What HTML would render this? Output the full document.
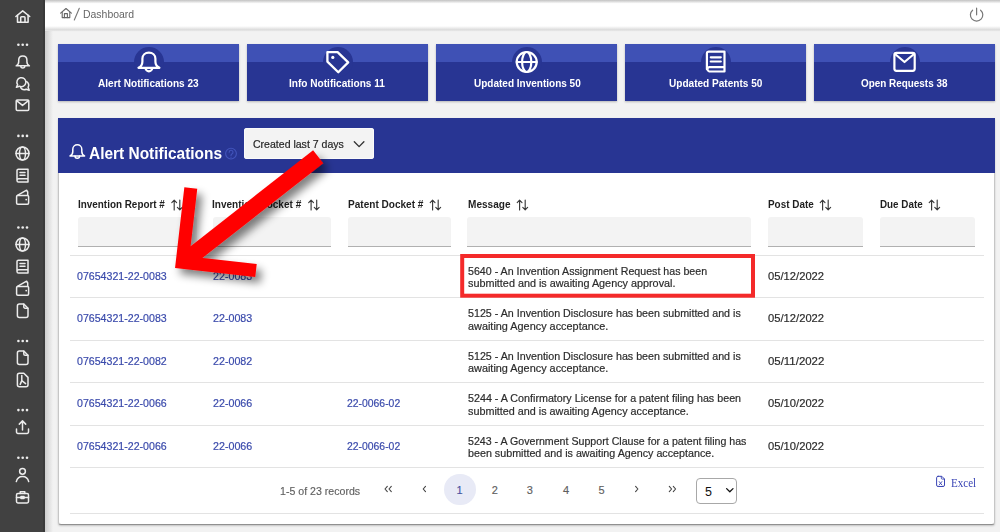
<!DOCTYPE html>
<html><head><meta charset="utf-8">
<style>
*{box-sizing:border-box;margin:0;padding:0}
html,body{width:1000px;height:532px;overflow:hidden;background:#f2f2f2;font-family:"Liberation Sans",sans-serif;position:relative}
.abs{position:absolute}
#side{left:0;top:0;width:45px;height:532px;background:#414141}
#top{left:45px;top:0;width:955px;height:30px;background:#fff;border-bottom:1px solid #dedede;box-shadow:0 1px 1px rgba(0,0,0,.06)}
#topshadow{left:45px;top:0;width:955px;height:6px;background:linear-gradient(#c2c2c2,rgba(255,255,255,.6) 60%,rgba(255,255,255,0))}
#topbot{left:45px;top:26px;width:955px;height:5px;background:linear-gradient(rgba(230,230,230,0),#dedede 70%,#e6e6e6)}
.card{top:44px;width:181px;height:57px;background:#283593;box-shadow:0 1px 2px rgba(0,0,0,.25)}
.card .band{position:absolute;left:0;top:0;width:100%;height:18px;background:#3f51b5}
.card .circ{position:absolute;left:75.5px;top:3px;width:30px;height:30px;border-radius:50%;background:#283593}
#panel{left:58px;top:118px;width:937px;height:407px;background:#fff;border:1px solid #c6c6c6;border-bottom:1px solid #909090;border-radius:0 0 3px 3px;box-shadow:0 1px 2px rgba(0,0,0,.2)}
#hdr{left:58px;top:118px;width:937px;height:55px;background:#283593}
.t{position:absolute;white-space:nowrap;transform-origin:0 0}
.crumb{font-size:11.5px;color:#666;line-height:14px}
.title{font-size:16.5px;font-weight:bold;color:#fff;line-height:18px}
.dd{font-size:11px;color:#262626;line-height:13px;-webkit-text-stroke:0.2px #262626}
.hd{font-size:11px;color:#1f1f1f;line-height:13px;font-weight:bold}
.cl{font-size:11.5px;color:#fff;line-height:13px;font-weight:bold}
.inp{position:absolute;top:217px;height:30px;background:#f3f3f3;border-bottom:1px solid #b0b0b0;border-radius:3px 3px 0 0}
.hl{position:absolute;left:70px;width:914px;height:1px;background:#e3e3e3}
.lnk{color:#3a4aab;font-size:11.4px;line-height:13px;-webkit-text-stroke:0.2px #3a4aab}
.msg{color:#2c2c2c;font-size:11.2px;line-height:13px;-webkit-text-stroke:0.2px #2c2c2c}
.dt{font-size:11.6px}
.pg{color:#5f5f5f;font-size:11px;line-height:13px;-webkit-text-stroke:0.15px #5f5f5f}
.pg.cur{color:#3f51b5}
.sel{font-size:12.5px;line-height:14px;color:#111}
.excel{font-family:"Liberation Serif",serif;font-size:11.5px;line-height:13px;color:#3a45b5}
</style></head><body>
<div id="side" class="abs"></div>
<div class="abs" style="left:43px;top:0;width:2px;height:532px;background:#393939"></div>
<div class="abs" style="left:45px;top:0;width:8px;height:532px;background:linear-gradient(90deg,#cdcdcd,#f2f2f2)"></div>
<div id="top" class="abs"></div>
<div id="topshadow" class="abs"></div>
<div id="topbot" class="abs"></div>
<div class="card abs" style="left:58px"><div class="band"></div><div class="circ"></div></div>
<div class="card abs" style="left:247px"><div class="band"></div><div class="circ"></div></div>
<div class="card abs" style="left:436px"><div class="band"></div><div class="circ"></div></div>
<div class="card abs" style="left:625px"><div class="band"></div><div class="circ"></div></div>
<div class="card abs" style="left:814px"><div class="band"></div><div class="circ"></div></div>
<div id="panel" class="abs"></div>
<div id="hdr" class="abs"></div>
<div class="abs" style="left:244px;top:128px;width:130px;height:31px;background:#f3f3f3;border-radius:3px;box-shadow:inset 0 0 0 1px #fafafa"></div>
<div class="inp" style="left:78px;width:119px"></div>
<div class="inp" style="left:213px;width:118px"></div>
<div class="inp" style="left:348px;width:103px"></div>
<div class="inp" style="left:467px;width:284px"></div>
<div class="inp" style="left:768px;width:95px"></div>
<div class="inp" style="left:880px;width:95px"></div>
<div class="hl" style="top:255px"></div>
<div class="hl" style="top:297px"></div>
<div class="hl" style="top:340px"></div>
<div class="hl" style="top:382px"></div>
<div class="hl" style="top:425px"></div>
<div class="hl" style="top:467px"></div>
<div class="hl" style="top:513px"></div>
<div class="abs" style="left:444.3px;top:473.5px;width:31.5px;height:31.5px;border-radius:50%;background:#e8eaf6"></div>
<div class="abs" style="left:695.5px;top:477.5px;width:41.5px;height:26px;border:1px solid #a8a8a8;border-radius:4px;background:#fff"></div>
<div id="crumb" class="t crumb" style="left:83.07px;top:7.00px;transform:scaleX(0.9095)">Dashboard</div>
<div id="title" class="t title" style="left:89.00px;top:144.00px;transform:scaleX(0.9366)">Alert Notifications</div>
<div id="dd" class="t dd" style="left:253.00px;top:138.00px;transform:scaleX(0.9579)">Created last 7 days</div>
<div id="hd0" class="t hd" style="left:78.00px;top:198.00px;transform:scaleX(0.8996)">Invention Report #</div>
<div id="hd1" class="t hd" style="left:212.42px;top:198.00px;transform:scaleX(0.9126)">Invention Docket #</div>
<div id="hd2" class="t hd" style="left:348.00px;top:198.00px;transform:scaleX(0.9139)">Patent Docket #</div>
<div id="hd3" class="t hd" style="left:468.00px;top:198.00px;transform:scaleX(0.9142)">Message</div>
<div id="hd4" class="t hd" style="left:768.00px;top:198.00px;transform:scaleX(0.9009)">Post Date</div>
<div id="hd5" class="t hd" style="left:880.00px;top:198.00px;transform:scaleX(0.8941)">Due Date</div>
<div id="cl0" class="t cl" style="left:98.00px;top:77.00px;transform:scaleX(0.8748)">Alert Notifications 23</div>
<div id="cl1" class="t cl" style="left:289.00px;top:77.00px;transform:scaleX(0.8777)">Info Notifications 11</div>
<div id="cl2" class="t cl" style="left:473.75px;top:77.00px;transform:scaleX(0.8700)">Updated Inventions 50</div>
<div id="cl3" class="t cl" style="left:668.63px;top:77.00px;transform:scaleX(0.8749)">Updated Patents 50</div>
<div id="cl4" class="t cl" style="left:861.00px;top:77.00px;transform:scaleX(0.8616)">Open Requests 38</div>
<div id="l1_0" class="t lnk" style="left:77.48px;top:269.90px;transform:scaleX(0.9317)">07654321-22-0083</div>
<div id="l2_0" class="t lnk" style="left:213.00px;top:269.90px;transform:scaleX(0.9385)">22-0083</div>
<div id="m1_0" class="t msg" style="left:467.50px;top:265.00px;transform:scaleX(0.9516)">5640 - An Invention Assignment Request has been</div>
<div id="m2_0" class="t msg" style="left:467.51px;top:277.00px;transform:scaleX(0.9670)">submitted and is awaiting Agency approval.</div>
<div id="dt_0" class="t msg dt" style="left:768.00px;top:269.30px;transform:scaleX(0.9666)">05/12/2022</div>
<div id="l1_1" class="t lnk" style="left:77.48px;top:311.90px;transform:scaleX(0.9317)">07654321-22-0083</div>
<div id="l2_1" class="t lnk" style="left:213.00px;top:311.90px;transform:scaleX(0.9385)">22-0083</div>
<div id="m1_1" class="t msg" style="left:467.50px;top:307.00px;transform:scaleX(0.9555)">5125 - An Invention Disclosure has been submitted and is</div>
<div id="m2_1" class="t msg" style="left:467.50px;top:320.00px;transform:scaleX(0.9720)">awaiting Agency acceptance.</div>
<div id="dt_1" class="t msg dt" style="left:768.00px;top:311.30px;transform:scaleX(0.9666)">05/12/2022</div>
<div id="l1_2" class="t lnk" style="left:77.49px;top:354.90px;transform:scaleX(0.9317)">07654321-22-0082</div>
<div id="l2_2" class="t lnk" style="left:213.00px;top:354.90px;transform:scaleX(0.9385)">22-0082</div>
<div id="m1_2" class="t msg" style="left:467.50px;top:350.00px;transform:scaleX(0.9555)">5125 - An Invention Disclosure has been submitted and is</div>
<div id="m2_2" class="t msg" style="left:467.50px;top:362.00px;transform:scaleX(0.9720)">awaiting Agency acceptance.</div>
<div id="dt_2" class="t msg dt" style="left:767.99px;top:354.30px;transform:scaleX(0.9845)">05/11/2022</div>
<div id="l1_3" class="t lnk" style="left:77.48px;top:396.90px;transform:scaleX(0.9317)">07654321-22-0066</div>
<div id="l2_3" class="t lnk" style="left:213.00px;top:396.90px;transform:scaleX(0.9385)">22-0066</div>
<div id="l3_3" class="t lnk" style="left:347.49px;top:396.90px;transform:scaleX(0.9126)">22-0066-02</div>
<div id="m1_3" class="t msg" style="left:467.50px;top:392.00px;transform:scaleX(0.9587)">5244 - A Confirmatory License for a patent filing has been</div>
<div id="m2_3" class="t msg" style="left:467.50px;top:405.00px;transform:scaleX(0.9649)">submitted and is awaiting Agency acceptance.</div>
<div id="dt_3" class="t msg dt" style="left:768.00px;top:396.30px;transform:scaleX(0.9666)">05/10/2022</div>
<div id="l1_4" class="t lnk" style="left:77.48px;top:439.90px;transform:scaleX(0.9317)">07654321-22-0066</div>
<div id="l2_4" class="t lnk" style="left:213.00px;top:439.90px;transform:scaleX(0.9385)">22-0066</div>
<div id="l3_4" class="t lnk" style="left:347.49px;top:439.90px;transform:scaleX(0.9126)">22-0066-02</div>
<div id="m1_4" class="t msg" style="left:467.51px;top:435.00px;transform:scaleX(0.9505)">5243 - A Government Support Clause for a patent filing has</div>
<div id="m2_4" class="t msg" style="left:467.50px;top:447.00px;transform:scaleX(0.9586)">been submitted and is awaiting Agency acceptance.</div>
<div id="dt_4" class="t msg dt" style="left:768.00px;top:439.30px;transform:scaleX(0.9666)">05/10/2022</div>
<div id="pgr" class="t pg" style="left:280.01px;top:484.50px;transform:scaleX(0.9640)">1-5 of 23 records</div>
<div id="pn1" class="t pg cur" style="left:456.50px;top:484.00px;transform:scaleX(1.0000)">1</div>
<div id="pn2" class="t pg" style="left:491.80px;top:484.00px;transform:scaleX(1.0000)">2</div>
<div id="pn3" class="t pg" style="left:526.80px;top:484.00px;transform:scaleX(1.0000)">3</div>
<div id="pn4" class="t pg" style="left:563.00px;top:484.00px;transform:scaleX(1.0000)">4</div>
<div id="pn5" class="t pg" style="left:598.60px;top:484.00px;transform:scaleX(1.0000)">5</div>
<div id="sel" class="t sel" style="left:705.00px;top:485.00px;transform:scaleX(1.0000)">5</div>
<div id="excel" class="t excel" style="left:951.00px;top:477.00px;transform:scaleX(0.9615)">Excel</div>
<svg class="abs" style="left:0;top:0" width="1000" height="532" viewBox="0 0 1000 532" fill="none" stroke-linecap="round" stroke-linejoin="round">
<defs>
<filter id="sh" x="-20%" y="-20%" width="150%" height="150%"><feGaussianBlur in="SourceAlpha" stdDeviation="4"/><feOffset dx="5" dy="6" result="b"/><feComponentTransfer><feFuncA type="linear" slope="0.5"/></feComponentTransfer><feMerge><feMergeNode/><feMergeNode in="SourceGraphic"/></feMerge></filter>
</defs>
<!-- sidebar icons -->
<g stroke="#ececec" stroke-width="1.55">
<path d="M15.9,16.5 L22.7,10.9 L29.7,16.5"/>
<path d="M17.5,15.2 V22.3 H28.1 V15.2"/>
<path d="M20.7,22.3 V17.6 Q20.7,16.8 21.5,16.8 H24.2 Q25,16.8 25,17.6 V22.3"/>
</g>
<g fill="#ececec">
<circle cx="18.4" cy="44.8" r="1.3"/><circle cx="22.7" cy="44.8" r="1.3"/><circle cx="27.0" cy="44.8" r="1.3"/>
<circle cx="18.4" cy="135.9" r="1.3"/><circle cx="22.7" cy="135.9" r="1.3"/><circle cx="27.0" cy="135.9" r="1.3"/>
<circle cx="18.4" cy="227.5" r="1.3"/><circle cx="22.7" cy="227.5" r="1.3"/><circle cx="27.0" cy="227.5" r="1.3"/>
<circle cx="18.4" cy="341" r="1.3"/><circle cx="22.7" cy="341" r="1.3"/><circle cx="27.0" cy="341" r="1.3"/>
<circle cx="18.4" cy="410.1" r="1.3"/><circle cx="22.7" cy="410.1" r="1.3"/><circle cx="27.0" cy="410.1" r="1.3"/>
<circle cx="18.4" cy="457.7" r="1.3"/><circle cx="22.7" cy="457.7" r="1.3"/><circle cx="27.0" cy="457.7" r="1.3"/>
</g>
<g stroke="#ececec" stroke-width="1.5">
<!-- bell -->
<path d="M16.2,65.8 H29.4 M16.2,65.8 C17.8,65 18.7,63.8 18.7,61.8 V60 C18.7,57.5 20.5,55.9 22.8,55.9 C25.1,55.9 26.9,57.5 26.9,60 V61.8 C26.9,63.8 27.8,65 29.4,65.8"/>
<path d="M20.8,66 A2,2 0 0 0 24.8,66"/>
<!-- chat -->
<path d="M16.4,87.2 L17.6,84.6 A4.5,4.5 0 1 1 19.4,86.2 Z"/>
<path d="M26.7,81.6 A4.5,4.5 0 0 1 28.1,87.3 L29.2,90.2 L26.3,89.2 A4.5,4.5 0 0 1 20.6,87.6"/>
<!-- mail -->
<rect x="16.2" y="100.1" width="12.6" height="10.3" rx="1.2"/>
<path d="M16.5,100.6 L22.5,105.4 L28.5,100.6"/>
<!-- globe -->
<circle cx="22.5" cy="153.5" r="6.5"/><path d="M16,153.5 H29"/><ellipse cx="22.5" cy="153.5" rx="3" ry="6.5"/>
<circle cx="22.5" cy="244.5" r="6.5"/><path d="M16,244.5 H29"/><ellipse cx="22.5" cy="244.5" rx="3" ry="6.5"/>
<!-- book -->
<path d="M17,180.3 V170.6 A1.4,1.4 0 0 1 18.4,169.2 H28 V182 H18.6 A1.6,1.6 0 0 1 18.6,178.8 H28"/>
<path d="M20,172.6 H25 M20,175.2 H25"/>
<path d="M17,271.3 V261.6 A1.4,1.4 0 0 1 18.4,260.2 H28 V273 H18.6 A1.6,1.6 0 0 1 18.6,269.8 H28"/>
<path d="M20,263.6 H25 M20,266.2 H25"/>
<!-- wallet -->
<rect x="16.6" y="195.4" width="12" height="8.8" rx="1.2"/>
<path d="M17.4,195.3 L26.6,190.2 L27.7,192 V195.3"/><circle cx="26.2" cy="199.6" r="0.9" fill="#ececec" stroke="none"/>
<rect x="16.6" y="286.4" width="12" height="8.8" rx="1.2"/>
<path d="M17.4,286.3 L26.6,281.2 L27.7,283 V286.3"/><circle cx="26.2" cy="290.6" r="0.9" fill="#ececec" stroke="none"/>
<!-- file -->
<path d="M17.4,306 A2,2 0 0 1 19.4,304 H23.8 L28,308.2 V315.6 A2,2 0 0 1 26,317.6 H19.4 A2,2 0 0 1 17.4,315.6 Z"/>
<path d="M23.8,304.2 V306.9 A1.3,1.3 0 0 0 25.1,308.2 H27.8"/>
<path d="M17.4,353 A2,2 0 0 1 19.4,351 H23.8 L28,355.2 V362.6 A2,2 0 0 1 26,364.6 H19.4 A2,2 0 0 1 17.4,362.6 Z"/>
<path d="M23.8,351.2 V353.9 A1.3,1.3 0 0 0 25.1,355.2 H27.8"/>
<!-- pdf -->
<path d="M17.4,375.2 A2,2 0 0 1 19.4,373.2 H23.8 L28,377.4 V384.8 A2,2 0 0 1 26,386.8 H19.4 A2,2 0 0 1 17.4,384.8 Z"/>
<path d="M21.8,375.6 V380.6 L20.2,384.4 M21.8,380.6 L25.6,383.6"/>
<!-- upload -->
<path d="M16.5,429 V432 A1.4,1.4 0 0 0 17.9,433.4 H27.1 A1.4,1.4 0 0 0 28.5,432 V429"/>
<path d="M22.5,430 V421 M19.3,424.1 L22.5,420.9 L25.7,424.1"/>
<!-- person -->
<circle cx="22.5" cy="471.3" r="2.9"/>
<path d="M16.3,481.6 C17.2,477.8 19.5,476.5 22.5,476.5 C25.5,476.5 27.8,477.8 28.7,481.6"/>
<!-- briefcase -->
<rect x="16.5" y="493.6" width="12" height="9.4" rx="1.4"/>
<path d="M20.2,493.6 V491.8 H24.8 V493.6 M16.5,497.6 H28.5"/>
<rect x="21" y="496.6" width="3" height="2"/>
</g>

<!-- top bar icons -->
<g stroke="#666" stroke-width="1.1">
<path d="M60.6,13.2 L66,8.5 L71.4,13.2"/>
<path d="M62.2,12.4 V17.6 H69.8 V12.4"/>
<path d="M64.4,17.6 V13.6 H67.4 V17.6"/>
<path d="M79.3,8.2 L74.3,20" stroke="#777"/>
<path d="M972.6,10.2 A6.2,6.2 0 1 0 980.6,10.2 M976.6,8.2 V14.8" stroke="#777" stroke-width="1.2"/>
</g>

<!-- card icons -->
<g stroke="#fff" stroke-width="2.2">
<path d="M138.5,67.8 H159.4 M138.5,67.8 C141,66.6 142.4,64.8 142.4,61.5 V58.8 C142.4,55 145.3,52.6 148.9,52.6 C152.5,52.6 155.4,55 155.4,58.8 V61.5 C155.4,64.8 156.9,66.6 159.4,67.8"/>
<path d="M145.6,68 A3.3,3.3 0 0 0 152.2,68"/>
<path d="M327.4,52.2 H337.6 L348.2,62.4 L338.3,72.2 L327.4,61.6 Z" stroke-width="2.3"/>
<circle cx="332.8" cy="57.4" r="1.6" fill="#fff" stroke="none"/>
<circle cx="526.7" cy="62" r="10"/><path d="M516.7,62 H536.7"/><ellipse cx="526.7" cy="62" rx="4.6" ry="10"/>
<path d="M706.9,69.2 V53.3 A1.8,1.8 0 0 1 708.7,51.6 H724.5 V71.5 H709.2 A2.2,2.2 0 0 1 709.2,67.2 H724.5"/>
<path d="M710.8,57.3 H720.8 M710.8,61.5 H720.8"/>
<rect x="894.4" y="52.8" width="20.3" height="18" rx="2"/>
<path d="M895,54 L904.5,62 L914,54"/>
</g>
<!-- header bell -->
<g stroke="#fff" stroke-width="1.5">
<path d="M70,155.9 H84.6 M70,155.9 C71.8,155 72.8,153.6 72.8,151.4 V149.3 C72.8,146.4 75,144.8 77.3,144.8 C79.6,144.8 81.8,146.4 81.8,149.3 V151.4 C81.8,153.6 82.8,155 84.6,155.9"/>
<path d="M75,156 A2.3,2.3 0 0 0 79.6,156"/>
</g>
<circle cx="231" cy="153.6" r="5.4" stroke="#4254bb" stroke-width="1.1"/>
<path d="M229.2,152.2 A1.9,1.9 0 1 1 231.9,153.9 Q231,154.4 231,155.4" stroke="#4254bb" stroke-width="1.1"/><circle cx="231" cy="157.2" r="0.6" fill="#4254bb"/>
<!-- dropdown chevron -->
<path d="M354.3,141.7 L359.1,146.6 L363.9,141.7" stroke="#333" stroke-width="1.35"/>
<!-- sort icons -->
<g stroke="#3a3a3a" stroke-width="1.15">
<path d="M174.2,200.5 V210 M171.8,202.6 L174.2,200.2 L176.6,202.6 M179.8,200 V209.5 M177.4,207.4 L179.8,209.8 L182.2,207.4 M311.1,200.5 V210 M308.7,202.6 L311.1,200.2 L313.5,202.6 M316.7,200 V209.5 M314.3,207.4 L316.7,209.8 L319.1,207.4 M432.6,200.5 V210 M430.2,202.6 L432.6,200.2 L435.0,202.6 M438.2,200 V209.5 M435.8,207.4 L438.2,209.8 L440.6,207.4 M519.6,200.5 V210 M517.2,202.6 L519.6,200.2 L522.0,202.6 M525.2,200 V209.5 M522.8,207.4 L525.2,209.8 L527.6,207.4 M822.6,200.5 V210 M820.2,202.6 L822.6,200.2 L825.0,202.6 M828.2,200 V209.5 M825.8,207.4 L828.2,209.8 L830.6,207.4 M931.6,200.5 V210 M929.2,202.6 L931.6,200.2 L934.0,202.6 M937.2,200 V209.5 M934.8,207.4 L937.2,209.8 L939.6,207.4"/>
</g>
<!-- pagination chevrons -->
<g stroke="#444" stroke-width="1.1">
<path d="M387.3,486.3 L385,489 L387.3,491.7 M391.3,486.3 L389,489 L391.3,491.7"/>
<path d="M425.5,486.3 L423.2,489 L425.5,491.7"/>
<path d="M635.6,486.3 L637.9,489 L635.6,491.7"/>
<path d="M669.3,486.3 L671.6,489 L669.3,491.7 M673.3,486.3 L675.6,489 L673.3,491.7"/>
<path d="M726.6,488.6 L729.8,491.8 L733,488.6" stroke="#111" stroke-width="1.3"/>
</g>
<!-- excel icon -->
<g stroke="#3a45b5" stroke-width="1">
<path d="M938.1,476.3 H941.8 L944.5,479 V485 A1.5,1.5 0 0 1 943,486.5 H938.1 A1.5,1.5 0 0 1 936.6,485 V477.8 A1.5,1.5 0 0 1 938.1,476.3 Z"/>
<path d="M941.3,476.6 V478.1 A1,1 0 0 0 942.3,479.1 H944.2" stroke-width="0.9"/>
<path d="M939.2,481.6 L941.9,485 M941.9,481.6 L939.2,485" stroke-width="0.9"/>
</g>
<!-- red box -->
<rect x="462.2" y="256" width="290.8" height="39.7" stroke="#f42a2a" stroke-width="4" stroke-linecap="butt" stroke-linejoin="miter"/>
<!-- arrow -->
<g filter="url(#sh)" stroke="#ff0000" stroke-linecap="butt" stroke-linejoin="miter" stroke-miterlimit="10">
<path d="M318.2,156.7 L186.5,259.9" stroke-width="16.5"/>
<path d="M190.8,187.95 L182.25,262.15 L256,270.45" stroke-width="13"/>
</g>
</svg>
</body></html>
